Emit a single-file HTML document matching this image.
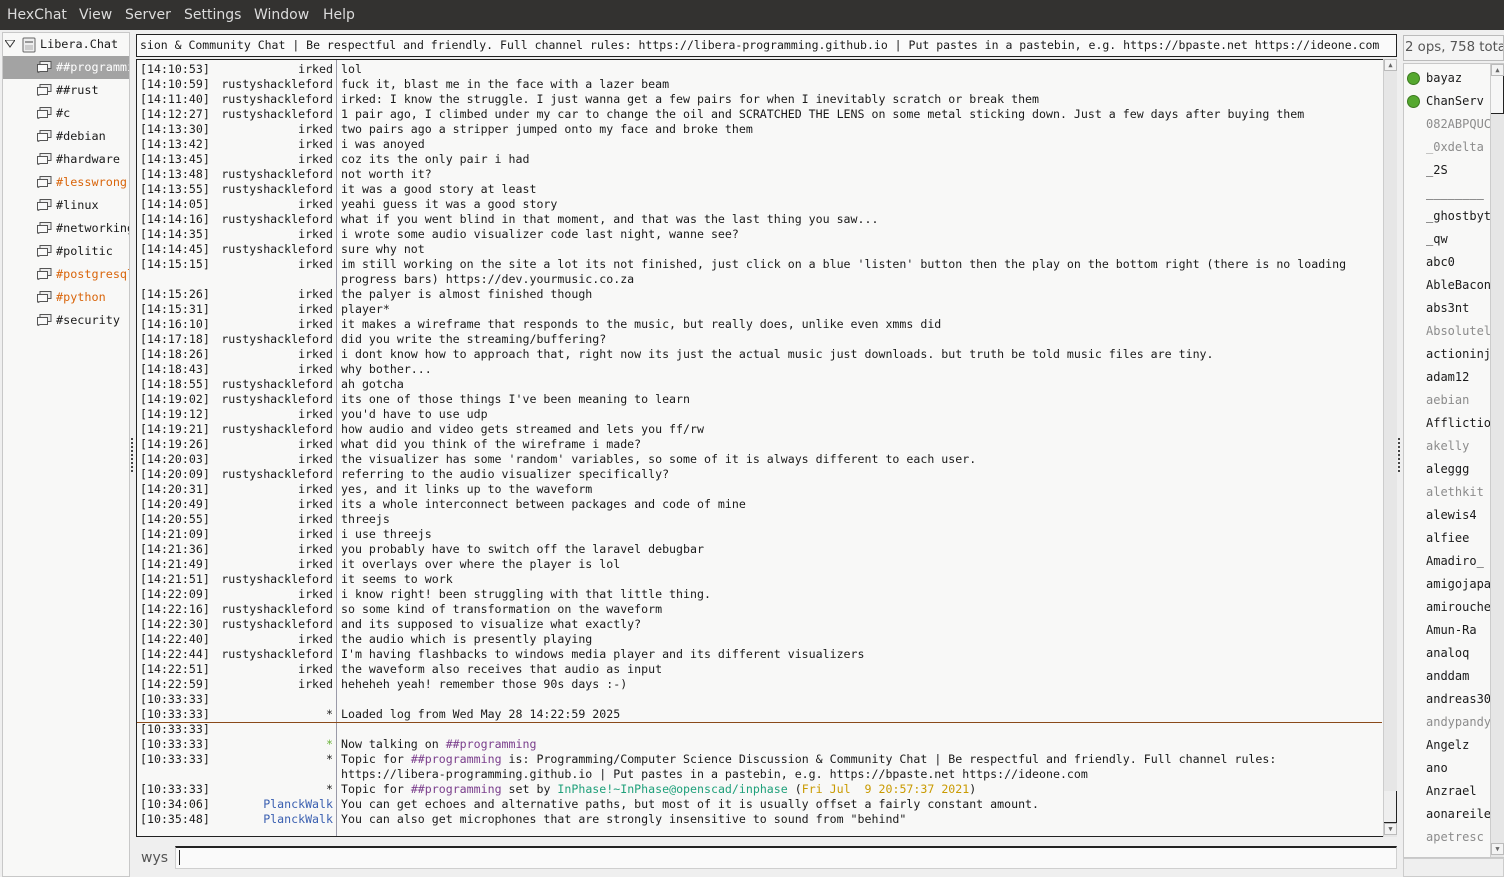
<!DOCTYPE html>
<html><head><meta charset="utf-8"><style>
*{margin:0;padding:0;box-sizing:border-box}
body{width:1504px;height:877px;background:#efefef;position:relative;overflow:hidden;font-family:"DejaVu Sans Mono","Liberation Mono",monospace;font-size:11.6px;color:#1a1a1a}
.menu{position:absolute;left:0;top:0;width:1504px;height:30px;background:#333230;color:#dcdcdc;font-family:"DejaVu Sans","Liberation Sans",sans-serif;font-size:14px}
.menu span{position:absolute;top:7px}
.tree{position:absolute;left:2px;top:32px;width:128px;height:845px;background:#f8f8f7;border:1px solid #c8c8c8}
.tree .r{position:absolute;left:0;width:126px;height:23px;line-height:23px;font-size:11.8px;white-space:nowrap;overflow:hidden}
.ic{position:absolute;left:34px;top:5px;width:15px;height:12px}
.tree .t{position:absolute;left:53px}
.or{color:#d9650b}
.topic{position:absolute;left:136px;top:34px;width:1261px;height:23px;background:#fafafa;border:1px solid #222;line-height:21px;padding-left:3px;white-space:nowrap;overflow:hidden;font-size:11.5px}
.chat{position:absolute;left:136px;top:59px;width:1261px;height:778px;background:#f8f8f7;border:1px solid #222;border-right:none}
.row{position:absolute;left:0;height:15px;line-height:15px;white-space:pre}
.ts{position:absolute;left:3px}
.nk{position:absolute;right:1054px;text-align:right}
.ms{position:absolute;left:204px}
.sep{position:absolute;left:199px;top:0;width:1px;height:776px;background:#9a9aa8}
.sb{position:absolute;left:1383px;top:59px;width:14px;height:778px;background:#e6e6e6;border-left:1px solid #ccc}
.inp{position:absolute;left:175px;top:846px;width:1222px;height:23px;background:#fafafa;border:1px solid #cfcfcf;border-top:2px solid #222}
.ul{position:absolute;left:1403px;top:63px;width:101px;height:795px;background:#f8f8f7;border:1px solid #c8c8c8}
.u{position:absolute;left:22px;font-size:12px;white-space:nowrap;height:23px;line-height:23px}
.g{color:#8c8c8c}
.dot{position:absolute;left:1px;top:5px;width:13px;height:13px;border-radius:50%;background:#55a82f;border:1px solid #3c7a20}
.pur{color:#7a3e8c}.grn{color:#1fa07a}.yel{color:#c99a00}.blu{color:#3a5fb0}
</style></head><body>
<div class="menu"><span style="left:7px">HexChat</span><span style="left:79px">View</span><span style="left:125px">Server</span><span style="left:184px">Settings</span><span style="left:254px">Window</span><span style="left:323px">Help</span></div>

<div class="tree">
<div class="r" style="top:0"><svg style="position:absolute;left:2px;top:7px" width="10" height="8"><path d="M0 0H10L5 7Z" fill="none" stroke="#333"/></svg><svg style="position:absolute;left:19px;top:4px" width="14" height="16"><rect x="1" y="1" width="12" height="14" rx="1" fill="#eee" stroke="#666"/><rect x="3" y="4" width="8" height="2" fill="#999"/><rect x="3" y="8" width="8" height="5" fill="#ccc"/></svg><span style="position:absolute;left:37px">Libera.Chat</span></div>
<div class="r" style="top:23px;background:#a3a3a3;color:#fff"><svg class="ic" viewBox="0 0 15 12"><rect x="3" y="0.5" width="11" height="7" fill="#eee" stroke="#555"/><path d="M0.5 3.5H10.5V10.5H3L1 11.5V10.5H0.5Z" fill="#fafafa" stroke="#555"/></svg><span class="t">##programming</span></div>
<div class="r" style="top:46px"><svg class="ic" viewBox="0 0 15 12"><rect x="3" y="0.5" width="11" height="7" fill="#eee" stroke="#555"/><path d="M0.5 3.5H10.5V10.5H3L1 11.5V10.5H0.5Z" fill="#fafafa" stroke="#555"/></svg><span class="t">##rust</span></div>
<div class="r" style="top:69px"><svg class="ic" viewBox="0 0 15 12"><rect x="3" y="0.5" width="11" height="7" fill="#eee" stroke="#555"/><path d="M0.5 3.5H10.5V10.5H3L1 11.5V10.5H0.5Z" fill="#fafafa" stroke="#555"/></svg><span class="t">#c</span></div>
<div class="r" style="top:92px"><svg class="ic" viewBox="0 0 15 12"><rect x="3" y="0.5" width="11" height="7" fill="#eee" stroke="#555"/><path d="M0.5 3.5H10.5V10.5H3L1 11.5V10.5H0.5Z" fill="#fafafa" stroke="#555"/></svg><span class="t">#debian</span></div>
<div class="r" style="top:115px"><svg class="ic" viewBox="0 0 15 12"><rect x="3" y="0.5" width="11" height="7" fill="#eee" stroke="#555"/><path d="M0.5 3.5H10.5V10.5H3L1 11.5V10.5H0.5Z" fill="#fafafa" stroke="#555"/></svg><span class="t">#hardware</span></div>
<div class="r" style="top:138px"><svg class="ic" viewBox="0 0 15 12"><rect x="3" y="0.5" width="11" height="7" fill="#eee" stroke="#555"/><path d="M0.5 3.5H10.5V10.5H3L1 11.5V10.5H0.5Z" fill="#fafafa" stroke="#555"/></svg><span class="t or">#lesswrong</span></div>
<div class="r" style="top:161px"><svg class="ic" viewBox="0 0 15 12"><rect x="3" y="0.5" width="11" height="7" fill="#eee" stroke="#555"/><path d="M0.5 3.5H10.5V10.5H3L1 11.5V10.5H0.5Z" fill="#fafafa" stroke="#555"/></svg><span class="t">#linux</span></div>
<div class="r" style="top:184px"><svg class="ic" viewBox="0 0 15 12"><rect x="3" y="0.5" width="11" height="7" fill="#eee" stroke="#555"/><path d="M0.5 3.5H10.5V10.5H3L1 11.5V10.5H0.5Z" fill="#fafafa" stroke="#555"/></svg><span class="t">#networking</span></div>
<div class="r" style="top:207px"><svg class="ic" viewBox="0 0 15 12"><rect x="3" y="0.5" width="11" height="7" fill="#eee" stroke="#555"/><path d="M0.5 3.5H10.5V10.5H3L1 11.5V10.5H0.5Z" fill="#fafafa" stroke="#555"/></svg><span class="t">#politic</span></div>
<div class="r" style="top:230px"><svg class="ic" viewBox="0 0 15 12"><rect x="3" y="0.5" width="11" height="7" fill="#eee" stroke="#555"/><path d="M0.5 3.5H10.5V10.5H3L1 11.5V10.5H0.5Z" fill="#fafafa" stroke="#555"/></svg><span class="t or">#postgresql</span></div>
<div class="r" style="top:253px"><svg class="ic" viewBox="0 0 15 12"><rect x="3" y="0.5" width="11" height="7" fill="#eee" stroke="#555"/><path d="M0.5 3.5H10.5V10.5H3L1 11.5V10.5H0.5Z" fill="#fafafa" stroke="#555"/></svg><span class="t or">#python</span></div>
<div class="r" style="top:276px"><svg class="ic" viewBox="0 0 15 12"><rect x="3" y="0.5" width="11" height="7" fill="#eee" stroke="#555"/><path d="M0.5 3.5H10.5V10.5H3L1 11.5V10.5H0.5Z" fill="#fafafa" stroke="#555"/></svg><span class="t">#security</span></div>
</div>
<div style="position:absolute;left:131px;top:438px;width:2px;height:34px;border-left:2px dotted #444"></div>
<div style="position:absolute;left:1398px;top:438px;width:2px;height:34px;border-left:2px dotted #444"></div>

<div class="topic">sion &amp; Community Chat | Be respectful and friendly. Full channel rules: https://libera-programming.github.io | Put pastes in a pastebin, e.g. https://bpaste.net https://ideone.com</div>

<div class="chat">
<div class="sep"></div>
<div class="row" style="top:2px;width:1250px"><span class="ts">[14:10:53]</span><span class="nk">irked</span><span class="ms">lol</span></div>
<div class="row" style="top:17px;width:1250px"><span class="ts">[14:10:59]</span><span class="nk">rustyshackleford</span><span class="ms">fuck it, blast me in the face with a lazer beam</span></div>
<div class="row" style="top:32px;width:1250px"><span class="ts">[14:11:40]</span><span class="nk">rustyshackleford</span><span class="ms">irked: I know the struggle. I just wanna get a few pairs for when I inevitably scratch or break them</span></div>
<div class="row" style="top:47px;width:1250px"><span class="ts">[14:12:27]</span><span class="nk">rustyshackleford</span><span class="ms">1 pair ago, I climbed under my car to change the oil and SCRATCHED THE LENS on some metal sticking down. Just a few days after buying them</span></div>
<div class="row" style="top:62px;width:1250px"><span class="ts">[14:13:30]</span><span class="nk">irked</span><span class="ms">two pairs ago a stripper jumped onto my face and broke them</span></div>
<div class="row" style="top:77px;width:1250px"><span class="ts">[14:13:42]</span><span class="nk">irked</span><span class="ms">i was anoyed</span></div>
<div class="row" style="top:92px;width:1250px"><span class="ts">[14:13:45]</span><span class="nk">irked</span><span class="ms">coz its the only pair i had</span></div>
<div class="row" style="top:107px;width:1250px"><span class="ts">[14:13:48]</span><span class="nk">rustyshackleford</span><span class="ms">not worth it?</span></div>
<div class="row" style="top:122px;width:1250px"><span class="ts">[14:13:55]</span><span class="nk">rustyshackleford</span><span class="ms">it was a good story at least</span></div>
<div class="row" style="top:137px;width:1250px"><span class="ts">[14:14:05]</span><span class="nk">irked</span><span class="ms">yeahi guess it was a good story</span></div>
<div class="row" style="top:152px;width:1250px"><span class="ts">[14:14:16]</span><span class="nk">rustyshackleford</span><span class="ms">what if you went blind in that moment, and that was the last thing you saw...</span></div>
<div class="row" style="top:167px;width:1250px"><span class="ts">[14:14:35]</span><span class="nk">irked</span><span class="ms">i wrote some audio visualizer code last night, wanne see?</span></div>
<div class="row" style="top:182px;width:1250px"><span class="ts">[14:14:45]</span><span class="nk">rustyshackleford</span><span class="ms">sure why not</span></div>
<div class="row" style="top:197px;width:1250px"><span class="ts">[14:15:15]</span><span class="nk">irked</span><span class="ms">im still working on the site a lot its not finished, just click on a blue 'listen' button then the play on the bottom right (there is no loading</span></div>
<div class="row" style="top:212px;width:1250px"><span class="ms">progress bars) https://dev.yourmusic.co.za</span></div>
<div class="row" style="top:227px;width:1250px"><span class="ts">[14:15:26]</span><span class="nk">irked</span><span class="ms">the palyer is almost finished though</span></div>
<div class="row" style="top:242px;width:1250px"><span class="ts">[14:15:31]</span><span class="nk">irked</span><span class="ms">player*</span></div>
<div class="row" style="top:257px;width:1250px"><span class="ts">[14:16:10]</span><span class="nk">irked</span><span class="ms">it makes a wireframe that responds to the music, but really does, unlike even xmms did</span></div>
<div class="row" style="top:272px;width:1250px"><span class="ts">[14:17:18]</span><span class="nk">rustyshackleford</span><span class="ms">did you write the streaming/buffering?</span></div>
<div class="row" style="top:287px;width:1250px"><span class="ts">[14:18:26]</span><span class="nk">irked</span><span class="ms">i dont know how to approach that, right now its just the actual music just downloads. but truth be told music files are tiny.</span></div>
<div class="row" style="top:302px;width:1250px"><span class="ts">[14:18:43]</span><span class="nk">irked</span><span class="ms">why bother...</span></div>
<div class="row" style="top:317px;width:1250px"><span class="ts">[14:18:55]</span><span class="nk">rustyshackleford</span><span class="ms">ah gotcha</span></div>
<div class="row" style="top:332px;width:1250px"><span class="ts">[14:19:02]</span><span class="nk">rustyshackleford</span><span class="ms">its one of those things I've been meaning to learn</span></div>
<div class="row" style="top:347px;width:1250px"><span class="ts">[14:19:12]</span><span class="nk">irked</span><span class="ms">you'd have to use udp</span></div>
<div class="row" style="top:362px;width:1250px"><span class="ts">[14:19:21]</span><span class="nk">rustyshackleford</span><span class="ms">how audio and video gets streamed and lets you ff/rw</span></div>
<div class="row" style="top:377px;width:1250px"><span class="ts">[14:19:26]</span><span class="nk">irked</span><span class="ms">what did you think of the wireframe i made?</span></div>
<div class="row" style="top:392px;width:1250px"><span class="ts">[14:20:03]</span><span class="nk">irked</span><span class="ms">the visualizer has some 'random' variables, so some of it is always different to each user.</span></div>
<div class="row" style="top:407px;width:1250px"><span class="ts">[14:20:09]</span><span class="nk">rustyshackleford</span><span class="ms">referring to the audio visualizer specifically?</span></div>
<div class="row" style="top:422px;width:1250px"><span class="ts">[14:20:31]</span><span class="nk">irked</span><span class="ms">yes, and it links up to the waveform</span></div>
<div class="row" style="top:437px;width:1250px"><span class="ts">[14:20:49]</span><span class="nk">irked</span><span class="ms">its a whole interconnect between packages and code of mine</span></div>
<div class="row" style="top:452px;width:1250px"><span class="ts">[14:20:55]</span><span class="nk">irked</span><span class="ms">threejs</span></div>
<div class="row" style="top:467px;width:1250px"><span class="ts">[14:21:09]</span><span class="nk">irked</span><span class="ms">i use threejs</span></div>
<div class="row" style="top:482px;width:1250px"><span class="ts">[14:21:36]</span><span class="nk">irked</span><span class="ms">you probably have to switch off the laravel debugbar</span></div>
<div class="row" style="top:497px;width:1250px"><span class="ts">[14:21:49]</span><span class="nk">irked</span><span class="ms">it overlays over where the player is lol</span></div>
<div class="row" style="top:512px;width:1250px"><span class="ts">[14:21:51]</span><span class="nk">rustyshackleford</span><span class="ms">it seems to work</span></div>
<div class="row" style="top:527px;width:1250px"><span class="ts">[14:22:09]</span><span class="nk">irked</span><span class="ms">i know right! been struggling with that little thing.</span></div>
<div class="row" style="top:542px;width:1250px"><span class="ts">[14:22:16]</span><span class="nk">rustyshackleford</span><span class="ms">so some kind of transformation on the waveform</span></div>
<div class="row" style="top:557px;width:1250px"><span class="ts">[14:22:30]</span><span class="nk">rustyshackleford</span><span class="ms">and its supposed to visualize what exactly?</span></div>
<div class="row" style="top:572px;width:1250px"><span class="ts">[14:22:40]</span><span class="nk">irked</span><span class="ms">the audio which is presently playing</span></div>
<div class="row" style="top:587px;width:1250px"><span class="ts">[14:22:44]</span><span class="nk">rustyshackleford</span><span class="ms">I'm having flashbacks to windows media player and its different visualizers</span></div>
<div class="row" style="top:602px;width:1250px"><span class="ts">[14:22:51]</span><span class="nk">irked</span><span class="ms">the waveform also receives that audio as input</span></div>
<div class="row" style="top:617px;width:1250px"><span class="ts">[14:22:59]</span><span class="nk">irked</span><span class="ms">heheheh yeah! remember those 90s days :-)</span></div>
<div class="row" style="top:632px;width:1250px"><span class="ts">[10:33:33]</span></div>
<div class="row" style="top:647px;width:1250px"><span class="ts">[10:33:33]</span><span class="nk">*</span><span class="ms">Loaded log from Wed May 28 14:22:59 2025</span></div>
<div style="position:absolute;left:0;top:662px;width:1245px;height:1px;background:#8a4a1a"></div>
<div class="row" style="top:662px;width:1250px"><span class="ts">[10:33:33]</span></div>
<div class="row" style="top:677px;width:1250px"><span class="ts">[10:33:33]</span><span class="nk" style="color:#6bb33a">*</span><span class="ms">Now talking on <span class="pur">##programming</span></span></div>
<div class="row" style="top:692px;width:1250px"><span class="ts">[10:33:33]</span><span class="nk">*</span><span class="ms">Topic for <span class="pur">##programming</span> is: Programming/Computer Science Discussion &amp; Community Chat | Be respectful and friendly. Full channel rules:</span></div>
<div class="row" style="top:707px;width:1250px"><span class="ms">https://libera-programming.github.io | Put pastes in a pastebin, e.g. https://bpaste.net https://ideone.com</span></div>
<div class="row" style="top:722px;width:1250px"><span class="ts">[10:33:33]</span><span class="nk">*</span><span class="ms">Topic for <span class="pur">##programming</span> set by <span class="grn">InPhase!~InPhase@openscad/inphase</span> (<span class="yel">Fri Jul  9 20:57:37 2021</span>)</span></div>
<div class="row" style="top:737px;width:1250px"><span class="ts">[10:34:06]</span><span class="nk blu">PlanckWalk</span><span class="ms">You can get echoes and alternative paths, but most of it is usually offset a fairly constant amount.</span></div>
<div class="row" style="top:752px;width:1250px"><span class="ts">[10:35:48]</span><span class="nk blu">PlanckWalk</span><span class="ms">You can also get microphones that are strongly insensitive to sound from "behind"</span></div>
</div>
<div class="sb">
<div style="position:absolute;left:0;top:0;width:13px;height:12px;background:#f3f3f3;border:1px solid #bbb;font-size:7px;text-align:center;line-height:10px;color:#666">▲</div>
<div style="position:absolute;left:0;top:732px;width:13px;height:32px;background:#eee;border-right:1px solid #222;border-bottom:1px solid #222"></div>
<div style="position:absolute;left:0;top:764px;width:13px;height:12px;background:#f3f3f3;border:1px solid #bbb;font-size:7px;text-align:center;line-height:10px;color:#666">▼</div>
</div>

<div style="position:absolute;left:141px;top:850px;font-family:'DejaVu Sans','Liberation Sans',sans-serif;font-size:14px;color:#555">wys</div>
<div class="inp"><div style="position:absolute;left:3px;top:2px;width:1px;height:15px;background:#222"></div></div>

<div style="position:absolute;left:1403px;top:35px;width:101px;height:26px;border:1px solid #bbb;background:#f4f4f4;font-family:'DejaVu Sans','Liberation Sans',sans-serif;font-size:13.3px;color:#555;line-height:24px;padding-left:1px;white-space:nowrap;overflow:hidden">2 ops, 758 total</div>
<div class="ul">
<div class="u" style="top:3px;left:2px;width:84px"><div class="dot"></div><span style="position:absolute;left:20px">bayaz</span></div>
<div class="u" style="top:26px;left:2px;width:84px"><div class="dot"></div><span style="position:absolute;left:20px">ChanServ</span></div>
<div class="u g" style="top:49px">082ABPQUC</div>
<div class="u g" style="top:72px">_0xdelta</div>
<div class="u" style="top:95px">_2S</div>
<div class="u" style="top:118px">________</div>
<div class="u" style="top:141px">_ghostbyt</div>
<div class="u" style="top:164px">_qw</div>
<div class="u" style="top:187px">abc0</div>
<div class="u" style="top:210px">AbleBacon</div>
<div class="u" style="top:233px">abs3nt</div>
<div class="u g" style="top:256px">Absolutel</div>
<div class="u" style="top:279px">actioninj</div>
<div class="u" style="top:302px">adam12</div>
<div class="u g" style="top:325px">aebian</div>
<div class="u" style="top:348px">Afflictio</div>
<div class="u g" style="top:371px">akelly</div>
<div class="u" style="top:394px">aleggg</div>
<div class="u g" style="top:417px">alethkit</div>
<div class="u" style="top:440px">alewis4</div>
<div class="u" style="top:463px">alfiee</div>
<div class="u" style="top:486px">Amadiro_</div>
<div class="u" style="top:509px">amigojapa</div>
<div class="u" style="top:532px">amirouche</div>
<div class="u" style="top:555px">Amun-Ra</div>
<div class="u" style="top:578px">analoq</div>
<div class="u" style="top:601px">anddam</div>
<div class="u" style="top:624px">andreas30</div>
<div class="u g" style="top:647px">andypandy</div>
<div class="u" style="top:670px">Angelz</div>
<div class="u" style="top:693px">ano</div>
<div class="u" style="top:716px">Anzrael</div>
<div class="u" style="top:739px">aonareile</div>
<div class="u g" style="top:762px">apetresc</div>
<div style="position:absolute;left:86px;top:0;width:14px;height:793px;background:#e6e6e6;border-left:1px solid #ccc">
<div style="position:absolute;left:0;top:0;width:13px;height:12px;background:#f3f3f3;border:1px solid #bbb;font-size:7px;text-align:center;line-height:10px;color:#666">▲</div>
<div style="position:absolute;left:0;top:12px;width:13px;height:38px;background:#f6f6f6;border-right:1px solid #222;border-bottom:1px solid #222"></div>
<div style="position:absolute;left:0;top:779px;width:13px;height:12px;background:#f3f3f3;border:1px solid #bbb;font-size:7px;text-align:center;line-height:10px;color:#666">▼</div>
</div>
</div>
<div style="position:absolute;left:1403px;top:858px;width:101px;height:19px;border:1px solid #ccc;background:#efefef"></div>
</body></html>
